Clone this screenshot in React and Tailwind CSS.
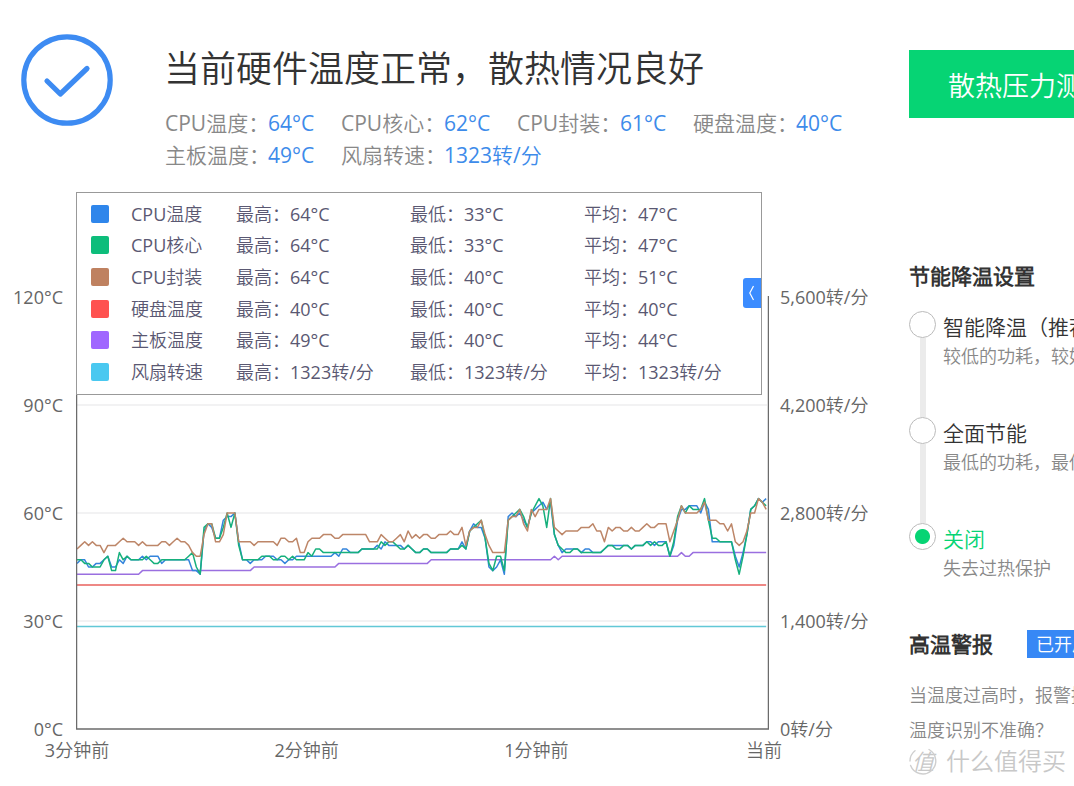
import React from "react";

const STATS = [
  ["CPU温度：", "64°C"],
  ["CPU核心：", "62°C"],
  ["CPU封装：", "61°C"],
  ["硬盘温度：", "40°C"],
  ["主板温度：", "49°C"],
  ["风扇转速：", "1323转/分"],
];

const LEGEND = [
  ["CPU温度", "bg-[#2f86eb]", "64°C", "33°C", "47°C"],
  ["CPU核心", "bg-[#0dbd7b]", "64°C", "33°C", "47°C"],
  ["CPU封装", "bg-[#bf8160]", "64°C", "40°C", "51°C"],
  ["硬盘温度", "bg-[#ff5250]", "40°C", "40°C", "40°C"],
  ["主板温度", "bg-[#a066ff]", "49°C", "40°C", "44°C"],
  ["风扇转速", "bg-[#4ac8f0]", "1323转/分", "1323转/分", "1323转/分"],
];

const MODES = [
  ["smart", "智能降温（推荐）", "较低的功耗，较好的性能"],
  ["saving", "全面节能", "最低的功耗，最低的温度"],
  ["off", "关闭", "失去过热保护"],
];

// One sample per second, oldest first.
const CPU_PACKAGE = [
  50, 51, 52, 51, 52, 51, 51, 49, 51, 51, 51, 52, 53, 52, 52, 52, 51, 52, 51, 51,
  51, 51, 52, 52, 51, 52, 53, 52, 52, 51, 49, 48, 48, 54, 57, 57, 52, 52, 54, 60,
  60, 60, 52, 52, 52, 52, 51, 52, 52, 52, 52, 52, 51, 53, 53, 52, 52, 53, 49, 49,
  52, 53, 53, 53, 54, 54, 54, 53, 53, 54, 54, 54, 54, 54, 54, 54, 52, 52, 52, 54,
  53, 52, 52, 53, 54, 52, 55, 53, 54, 53, 54, 54, 53, 53, 54, 54, 54, 55, 54, 54,
  56, 51, 55, 56, 56, 58, 54, 51, 49, 49, 49, 49, 58, 59, 59, 61, 57, 55, 61, 59,
  61, 61, 61, 64, 56, 55, 54, 55, 55, 55, 55, 56, 56, 56, 57, 55, 55, 52, 56, 55,
  56, 56, 55, 55, 56, 55, 55, 56, 57, 56, 56, 57, 57, 57, 52, 55, 58, 62, 60, 60,
  60, 60, 61, 63, 58, 58, 58, 57, 57, 55, 57, 52, 51, 52, 55, 60, 60, 64, 63, 61,
];
const CPU_CORE = [
  47, 47, 46, 46, 45, 45, 45, 47, 48, 44, 44, 49, 47, 48, 47, 47, 47, 47, 48, 47,
  46, 46, 47, 47, 47, 47, 47, 47, 47, 48, 49, 45, 43, 56, 57, 57, 53, 53, 56, 60,
  56, 60, 51, 47, 47, 47, 47, 47, 48, 48, 48, 47, 47, 48, 48, 47, 48, 47, 47, 47,
  49, 48, 50, 50, 49, 49, 49, 49, 49, 49, 49, 49, 49, 49, 50, 50, 50, 50, 50, 52,
  51, 52, 52, 51, 50, 50, 51, 50, 49, 49, 50, 50, 49, 49, 49, 49, 49, 50, 50, 50,
  51, 50, 55, 56, 57, 58, 53, 46, 44, 48, 48, 44, 58, 59, 60, 61, 59, 56, 60, 62,
  64, 62, 56, 64, 54, 51, 50, 49, 49, 50, 50, 49, 49, 49, 49, 49, 49, 50, 51, 51,
  50, 50, 51, 51, 50, 51, 51, 51, 52, 51, 52, 51, 51, 52, 48, 52, 59, 62, 60, 62,
  61, 61, 61, 64, 58, 53, 53, 52, 52, 52, 52, 47, 43, 48, 54, 61, 62, 64, 63, 62,
];
const CPU_TEMP = [
  46, 47, 47, 45, 45, 46, 46, 47, 48, 45, 45, 47, 46, 48, 47, 47, 47, 48, 47, 48,
  48, 48, 46, 47, 47, 47, 47, 47, 47, 47, 44, 44, 43, 55, 57, 56, 53, 53, 58, 59,
  59, 60, 52, 47, 47, 46, 47, 47, 47, 48, 48, 48, 47, 47, 46, 47, 47, 48, 48, 48,
  48, 48, 48, 48, 48, 48, 48, 49, 48, 50, 50, 49, 49, 49, 50, 50, 50, 50, 51, 50,
  52, 51, 51, 51, 51, 50, 51, 50, 49, 49, 50, 50, 49, 49, 49, 49, 49, 50, 50, 50,
  52, 50, 55, 57, 56, 56, 53, 45, 44, 45, 47, 43, 59, 60, 59, 60, 58, 56, 60, 61,
  62, 63, 61, 63, 54, 51, 49, 50, 50, 50, 50, 49, 50, 50, 49, 49, 49, 50, 51, 51,
  51, 51, 51, 51, 50, 51, 51, 51, 52, 52, 51, 52, 52, 52, 48, 51, 58, 61, 61, 62,
  62, 62, 60, 63, 61, 52, 52, 52, 52, 52, 52, 48, 45, 49, 54, 61, 62, 64, 63, 64,
];
const BOARD = [
  ...Array(17).fill(43), ...Array(29).fill(44), ...Array(22).fill(45),
  ...Array(24).fill(46), ...Array(32).fill(47), 48, 47, ...Array(31).fill(48),
  49, 48, 48, ...Array(20).fill(49),
];

const toY = (deg) => 537 - deg * 3.6;
const toPoints = (data) =>
  data.map((d, i) => `${(1 + i * 3.85).toFixed(2)},${toY(d).toFixed(1)}`).join(" ");

const SERIES = [
  [Array(180).fill(40), "#e8605c"],
  [Array(180).fill(28.5), "#62c8d6"],
  [BOARD, "#9a6fe0"],
  [CPU_TEMP, "#3484dc"],
  [CPU_CORE, "#16b07c"],
  [CPU_PACKAGE, "#bd8668"],
];

function Axis({ labels, className }) {
  return (
    <div className={`flex flex-col pt-[51px] text-[18px] text-[#666] ${className}`}>
      {labels.map((t) => (
        <span key={t} className="flex h-[108px] items-center whitespace-nowrap">{t}</span>
      ))}
    </div>
  );
}

function Header() {
  return (
    <header className="flex gap-[51px] pl-[21px] pt-[34px]">
      <svg viewBox="0 0 92 92" className="size-[92px] shrink-0" fill="none" stroke="#3d8bf2" aria-hidden="true">
        <circle cx="46" cy="46" r="43.2" strokeWidth="5.2" />
        <path d="M26 47 L39.3 60 L66 34.5" strokeWidth="5.2" strokeLinecap="round" strokeLinejoin="round" />
      </svg>
      <div className="min-w-0 flex-1 pt-[9px]">
        <h1 className="whitespace-nowrap text-[36px] leading-[52px] text-[#333]">
          当前硬件温度正常，散热情况良好
        </h1>
        <dl className="grid grid-cols-[repeat(4,176px)] pl-px pt-3 text-[21px] leading-8">
          {STATS.map(([k, v]) => (
            <div key={k} className="flex whitespace-nowrap">
              <dt className="w-[103px] text-[#888]">{k}</dt>
              <dd className="text-[#3d8bea]">{v}</dd>
            </div>
          ))}
        </dl>
      </div>
    </header>
  );
}

function Legend() {
  return (
    <div className="absolute left-0 right-[7px] top-0 border border-[#999] bg-white pb-[6px] pl-[14px] pt-[5px]">
      <table className="h-[190px] text-left text-[18px] leading-6 text-[#5a5872]">
        <tbody>
          {LEGEND.map(([name, color, max, min, avg]) => (
            <tr key={name} className="whitespace-nowrap">
              <td className="w-10 p-0">
                <span className={`block size-[18px] rounded-[2px] ${color}`} />
              </td>
              <th scope="row" className="w-[105px] p-0 font-normal">{name}</th>
              <td className="w-[174px] p-0">最高：{max}</td>
              <td className="w-[174px] p-0">最低：{min}</td>
              <td className="p-0">平均：{avg}</td>
            </tr>
          ))}
        </tbody>
      </table>
      <button type="button" aria-label="收起" className="absolute right-0 top-[85px] flex h-[30px] w-[18px] items-center justify-center rounded-l-[3px] bg-[#3b8cff]">
        <svg viewBox="0 0 18 30" className="h-[30px] w-[18px]" fill="none" stroke="#fff" strokeWidth="1.2" aria-hidden="true">
          <path d="M10.5 8 L6.8 15 L10.5 22" />
        </svg>
      </button>
    </div>
  );
}

function Chart() {
  return (
    <section className="grid grid-cols-[76px_1fr_140px] pt-[21px]">
      <Axis className="items-end pr-[13px]" labels={["120°C", "90°C", "60°C", "30°C", "0°C"]} />
      <div className="relative min-w-0">
        <svg viewBox="0 0 693 538" preserveAspectRatio="none" className="h-[538px] w-full" fill="none" role="img" aria-label="温度曲线">
          {[30, 60, 90].map((d) => (
            <line key={d} x1="1" x2="691" y1={toY(d)} y2={toY(d)} stroke="#eeeeef" strokeWidth="1.5" />
          ))}
          {SERIES.map(([data, color]) => (
            <polyline key={color} points={toPoints(data)} stroke={color} strokeWidth="1.5" strokeLinejoin="round" />
          ))}
          <path d="M0.5 0 V537 H692.5 V104" stroke="#6b6b6b" strokeWidth="1.5" />
        </svg>
        <Legend />
        <div className="-ml-8 -mr-[30px] flex justify-between pt-[7px] text-[18px] leading-[26px] text-[#666]">
          {["3分钟前", "2分钟前", "1分钟前", "当前"].map((t) => (
            <span key={t} className="w-[66px] whitespace-nowrap text-center last:pr-1">{t}</span>
          ))}
        </div>
      </div>
      <Axis className="items-start pl-[11px]" labels={["5,600转/分", "4,200转/分", "2,800转/分", "1,400转/分", "0转/分"]} />
    </section>
  );
}

function Sidebar() {
  return (
    <aside className="w-[165px] shrink-0 whitespace-nowrap pt-[50px]">
      <button type="button" className="h-[68px] w-[240px] bg-[#06d474] pt-1 text-center text-[27px] text-white">
        散热压力测试
      </button>
      <fieldset className="pt-[142px]">
        <legend className="contents">
          <span className="block text-[21px] font-bold leading-8 text-[#333]">节能降温设置</span>
        </legend>
        <div className="pt-[19px]">
          {MODES.map(([id, title, desc], i) => (
            <label key={id} className="flex gap-[7px]">
              <span className="flex w-[27px] flex-col items-center">
                <input
                  type="radio"
                  name="mode"
                  defaultChecked={id === "off"}
                  className="size-[27px] shrink-0 appearance-none rounded-full border border-[#bbb] bg-white checked:bg-[radial-gradient(circle,#06d474_7px,#fff_8px)]"
                />
                {i < 2 && <span className="w-[6px] flex-1 bg-[#ebebeb]" />}
              </span>
              <span className={i < 2 ? "h-[106px] pt-[2px]" : "pt-[2px]"}>
                <span className={`block text-[21px] leading-[29px] ${id === "off" ? "text-[#06d474]" : "text-[#333]"}`}>{title}</span>
                <span className="block text-[18px] leading-[29px] text-[#888]">{desc}</span>
              </span>
            </label>
          ))}
        </div>
      </fieldset>
      <div className="flex items-center gap-[34px] pt-[45px]">
        <h2 className="text-[21px] font-bold leading-8 text-[#333]">高温警报</h2>
        <button type="button" className="h-[28px] bg-[#3788f5] px-[9px] text-[18px] leading-[28px] text-white">已开启</button>
      </div>
      <p className="pt-[17px] text-[18px] leading-9 text-[#888]">当温度过高时，报警提示</p>
      <a href="#help" className="block text-[18px] leading-[34px] text-[#888]">温度识别不准确？</a>
      <div className="flex items-center gap-[9px] text-[#c8c8c8]">
        <span className="relative flex size-[28px] items-center justify-center text-[22px] italic leading-none">
          <svg viewBox="0 0 28 28" className="absolute inset-0 size-[28px]" fill="none" stroke="#cfcfcf" strokeWidth="1.4" strokeLinecap="round" aria-hidden="true">
            <path d="M20 2.5 A13 13 0 1 1 1.6 18.5 M1 14 A13 13 0 0 1 6 3.7" />
          </svg>
          值
        </span>
        <span className="text-[24px] leading-6">什么值得买</span>
      </div>
    </aside>
  );
}

export default function App() {
  return (
    <div className="flex overflow-hidden bg-white font-['Open_Sans','Noto_Sans_CJK_SC_DemiLight','Noto_Sans_CJK_SC',sans-serif] font-normal">
      <main className="min-w-0 flex-1">
        <Header />
        <Chart />
      </main>
      <Sidebar />
    </div>
  );
}
